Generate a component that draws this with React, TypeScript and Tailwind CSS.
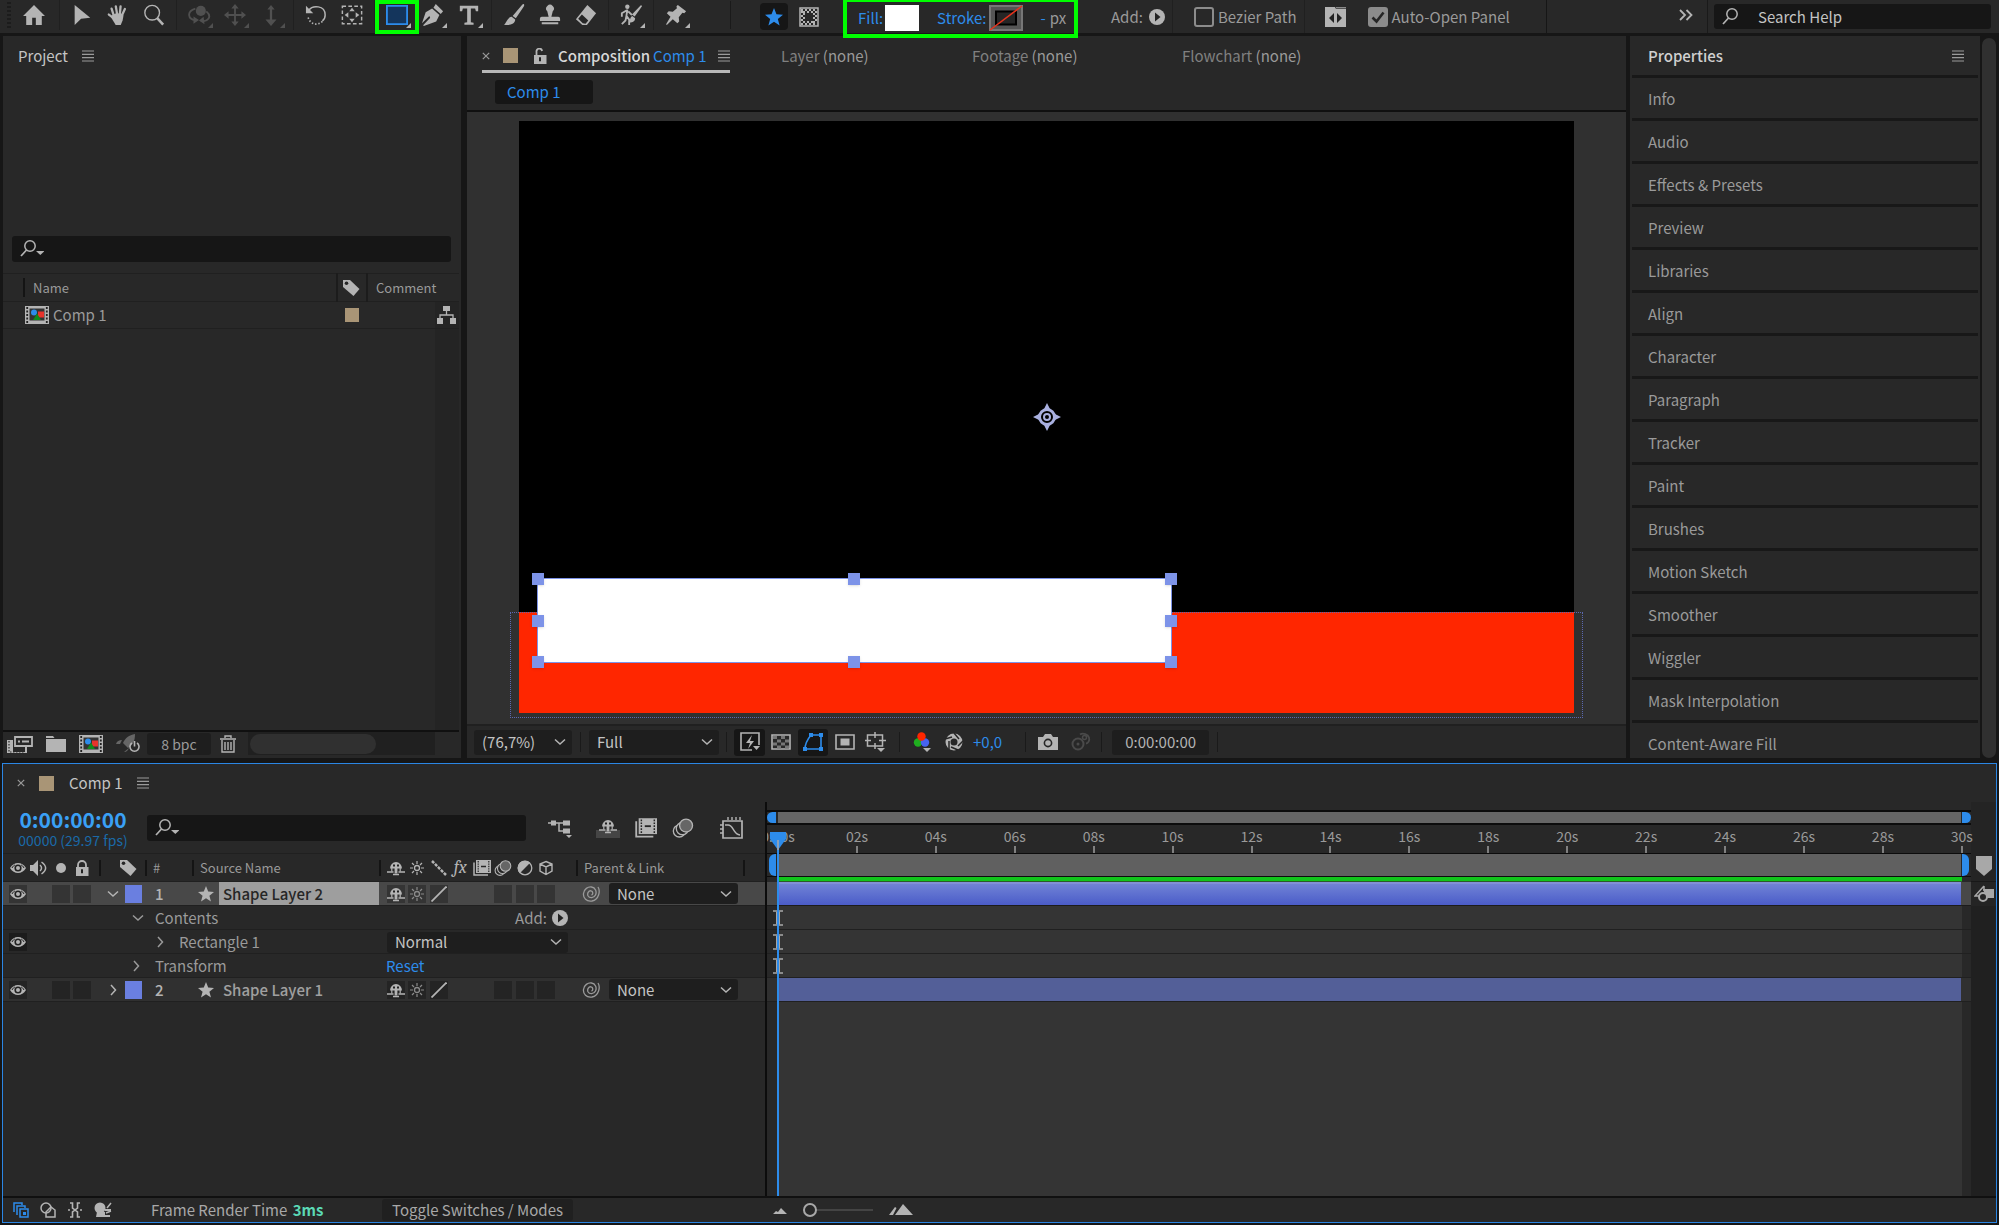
import type { ReactNode } from "react";

type IconProps = {
  children: ReactNode;
  className?: string;
  box?: string;
};

function Icon({ children, className = "h-6 w-6", box = "0 0 24 24" }: IconProps) {
  return (
    <svg
      viewBox={box}
      className={`shrink-0 ${className}`}
      fill="none"
      stroke="currentColor"
      strokeWidth="2"
      aria-hidden="true"
    >
      {children}
    </svg>
  );
}

const solid = { fill: "currentColor", stroke: "none" };

const MenuIcon = () => (
  <Icon className="h-3 w-3" box="0 0 12 12">
    <path d="M0 1h12M0 4.3h12M0 7.6h12M0 11h12" strokeWidth="1.2" />
  </Icon>
);

const CloseIcon = () => (
  <Icon className="h-2 w-2" box="0 0 8 8">
    <path d="M.8.8l6.4 6.4M7.2.8L.8 7.2" strokeWidth="1.2" />
  </Icon>
);

const ChevronDown = () => (
  <Icon className="h-3 w-3" box="0 0 12 12">
    <path d="M1 3.5l5 4.5 5-4.5" strokeWidth="1.5" />
  </Icon>
);

const ChevronRight = () => (
  <Icon className="h-3 w-3" box="0 0 12 12">
    <path d="M4 1l4.5 5L4 11" strokeWidth="1.5" />
  </Icon>
);

const SearchIcon = ({ menu = false }: { menu?: boolean }) => (
  <Icon className="h-5 w-6" box="0 0 24 20">
    <circle cx="10" cy="7" r="5.2" strokeWidth="1.5" />
    <path d="M6.5 11L1 17" strokeWidth="1.7" />
    {menu && <path d="M16 12h8.500l-4.200 4z" {...solid} />}
  </Icon>
);

const EyeIcon = () => (
  <Icon className="h-3 w-4" box="0 0 16 12">
    <path d="M0 6C4-.6 12-.6 16 6c-4 6.6-12 6.6-16 0z" {...solid} />
    <circle cx="8" cy="6" r="3.600" fill="#222" stroke="none" />
    <circle cx="8" cy="6" r="2" {...solid} />
    <path d="M2 6C3 4 4 3.4 5 3M14 6c-1-2-2-2.600-3-3" stroke="#222" strokeWidth="1" />
  </Icon>
);

const TagIcon = () => (
  <Icon className="h-[18px] w-[18px]" box="0 0 18 18">
    <path d="M1 1h7l9.500 9-6 7L1 8z" {...solid} />
    <circle cx="4.500" cy="4.300" r="1.800" fill="#262626" stroke="none" />
  </Icon>
);

const LockIcon = ({ open = false }: { open?: boolean }) => (
  <Icon className="h-4 w-[14px]" box="0 0 14 16">
    <path d={open ? "M3.500 7V4a2.800 2.800 0 0 1 5.600-1" : "M3 8V5a4 4 0 0 1 8 0v3"} strokeWidth="1.800" />
    <path d="M1 7h12.500v9H1z" {...solid} />
    <path d="M7 9.200v4" stroke="#222" strokeWidth="2" />
  </Icon>
);

const ShyIcon = () => (
  <Icon className="h-4 w-[18px]" box="0 0 18 16">
    <path d="M3 8.500a6 6.500 0 0 1 12 0zM7.600 8h2.800v5.500H7.600z" {...solid} />
    <path d="M0 12h6.500M11.500 12H18M6 14.500h6" strokeWidth="1.500" />
    <path d="M4.800 8v3.500M13.200 8v3.500" strokeWidth="1.200" />
    <path d="M6 4.500h2v2H6zM10 4.500h2v2h-2z" fill="#222" stroke="none" />
  </Icon>
);

const SunIcon = () => (
  <Icon className="h-4 w-4" box="0 0 16 16">
    <circle cx="8" cy="8" r="2.500" strokeWidth="1.300" />
    <path d="M8 1v3M8 12v3M1 8h3M12 8h3M3 3l2 2M11 11l2 2M13 3l-2 2M3 13l2-2" strokeWidth="1.200" />
  </Icon>
);

const SlashIcon = () => (
  <Icon className="h-4 w-4" box="0 0 16 16">
    <path d="M.500 15.500l15-15" strokeWidth="1.800" />
  </Icon>
);

const FrameBlendIcon = ({ className = "h-4 w-[18px]" }: { className?: string }) => (
  <Icon className={className} box="0 0 18 16">
    <path d="M1 2.500v12.500h14" strokeWidth="1.500" />
    <path d="M3 0h15v13H3z" {...solid} />
    <path d="M5.200 1v11M15.800 1v11" stroke="#262626" strokeWidth="1.200" strokeDasharray="1.400 1" />
    <path d="M8 6.500h5" stroke="#262626" strokeWidth="1.500" />
  </Icon>
);

const MotionBlurIcon = ({ className = "h-4 w-[18px]" }: { className?: string }) => (
  <Icon className={className} box="0 0 18 16">
    <circle cx="6" cy="10.500" r="4.900" fill="#262626" strokeWidth="1.100" />
    <circle cx="8.500" cy="8.500" r="5" fill="#262626" strokeWidth="1.100" />
    <circle cx="11.500" cy="6" r="5.300" fill="#666" strokeWidth="1.100" />
  </Icon>
);

const AdjustIcon = () => (
  <Icon className="h-4 w-4" box="0 0 16 16">
    <circle cx="8" cy="8" r="6.800" strokeWidth="1.300" />
    <path d="M2.800 13.200A7.300 7.300 0 0 1 13.200 2.800z" {...solid} />
  </Icon>
);

const CubeIcon = () => (
  <Icon className="h-4 w-4" box="0 0 16 16">
    <path d="M8 1.500l6 2.500v7l-6 3.500L2 11V4zM2 4l6 3 6-3M8 7v7" strokeWidth="1.400" />
  </Icon>
);

const SpiralIcon = () => (
  <Icon className="h-[18px] w-[18px]" box="0 0 18 18">
    <path
      d="M16 2c2.500 4 1 12.500-6 14C4.500 17 1 13 1.500 8.500 2 4 6 1.500 9.500 2c4 .5 5.500 5 4 8-1.500 3.200-6 3.500-7.500.8C5 8.500 6.500 5.500 9 5.800c2.200.4 2.300 3.700.5 4.200"
      strokeWidth="1.300"
    />
  </Icon>
);

const StarIcon = ({ className = "h-4 w-4" }: { className?: string }) => (
  <Icon className={className} box="0 0 16 16">
    <path d="M8 0l2.200 5.600 5.800.4-4.600 3.700L13 15.500l-5-3.300-5 3.300 1.600-5.800L0 6l5.800-.4z" {...solid} />
  </Icon>
);

const AddIcon = () => (
  <Icon className="h-4 w-4" box="0 0 16 16">
    <circle cx="8" cy="8" r="8" {...solid} />
    <path d="M6 3.500L11.500 8 6 12.500z" fill="#222" stroke="none" />
  </Icon>
);

const CompIcon = () => (
  <Icon className="h-[18px] w-6" box="0 0 24 18">
    <path d="M0 0h24v18H0z" {...solid} />
    <path d="M2.200 1v16M21.800 1v16" stroke="#222" strokeWidth="1.800" strokeDasharray="2 1.500" />
    <path d="M4.500 2.500h15v12h-15z" fill="#333" stroke="none" />
    <path d="M13 5.500h6v6h-6z" fill="#e8332c" stroke="none" />
    <circle cx="9" cy="6.500" r="3" fill="#2d8ceb" stroke="none" />
    <path d="M12 7.500l4 6.500H8z" fill="#118a1c" stroke="none" />
  </Icon>
);

/* ---------- Toolbar ---------- */

type Tool = { name: string; art: ReactNode; menu?: boolean; dim?: boolean; active?: boolean };

const toolGroups: Tool[][] = [
  [
    { name: "Selection", art: <path d="M4 1l17 14-10 1-7 7z" {...solid} /> },
    {
      name: "Hand",
      art: (
        <>
          <path d="M7.500 13L5 5M11 11L9.600 2.500M14 11l.8-8.500M16.500 12l3-6.500M8 16l-6-4.500" strokeWidth="2.500" strokeLinecap="round" />
          <path d="M6 12l4-2 6 .5 2 2-1 5.500-2 5H9.500L4 14z" {...solid} />
        </>
      ),
    },
    {
      name: "Zoom",
      art: (
        <>
          <circle cx="10" cy="9.500" r="8" strokeWidth="1.500" />
          <path d="M15.500 15.500l6.500 7" strokeWidth="2.800" />
        </>
      ),
    },
  ],
  [
    {
      name: "Orbit Around Cursor",
      dim: true,
      menu: true,
      art: (
        <>
          <circle cx="14" cy="7.500" r="5.500" {...solid} />
          <path d="M8 5C-2 8 0 17 8 17.500M20 8c7 6 1 12-6 10.500" />
          <path d="M6 13.500l6 4-6 4zM17 14l-5 4 6 4z" {...solid} />
        </>
      ),
    },
    {
      name: "Pan Under Cursor",
      dim: true,
      menu: true,
      art: (
        <>
          <path d="M12 4v16M4 12h16" />
          <path d="M12 0l4 5H8zM12 24l4-5H8zM0 12l5-4v8zM24 12l-5-4v8z" {...solid} />
        </>
      ),
    },
    {
      name: "Dolly Towards Cursor",
      dim: true,
      menu: true,
      art: (
        <>
          <path d="M12 4v15" strokeWidth="2.500" />
          <path d="M12 1l4 5H8zM12 24l6-7H6z" {...solid} />
        </>
      ),
    },
  ],
  [
    {
      name: "Rotation",
      art: (
        <>
          <path d="M4 7c4-6 18-6 18 5 0 3-1 5-3 6.500" strokeWidth="1.600" />
          <path d="M19 19c-5 5-14 4-16-6" strokeWidth="1.800" strokeDasharray="1.600 2" />
          <path d="M1 2v8h8z" {...solid} />
        </>
      ),
    },
    {
      name: "Pan Behind",
      art: (
        <>
          <path d="M1.500 2.500h21v19h-21z" strokeWidth="1.600" strokeDasharray="4 2.500" />
          <path d="M12 4l3 4H9zM12 20l3-4H9zM4 12l4-3v6zM20 12l-4-3v6z" {...solid} />
        </>
      ),
    },
  ],
  [
    { name: "Rectangle", active: true, menu: true, art: <path d="M1 2h22v20H1z" fill="#14355c" stroke="#2d8ceb" /> },
    {
      name: "Pen",
      menu: true,
      art: (
        <>
          <path d="M15 0l8 8-2.500 3L12.500 4zM11 5l8 7-3.500 7L2 24l-.8-.8L9 15l-1-2-8 8L4 9z" {...solid} />
          <circle cx="10.500" cy="13" r="2" {...solid} />
        </>
      ),
    },
    {
      name: "Type",
      menu: true,
      art: <path d="M2 2h20v6h-2.500l-.8-3H14v15l3 .5v2H7v-2l3-.5V5H5.300l-.8 3H2z" {...solid} />,
    },
  ],
  [
    {
      name: "Brush",
      art: <path d="M22.500 0c1 .5.8 1.500 0 3L14 15.500 10.500 13 20 2c1-1.300 2-2.500 2.500-2zM9.500 14l3.800 3c0 5-6.500 7-12.300 5.500 3-1.500 3-7.500 8.500-8.500z" {...solid} />,
    },
    {
      name: "Clone Stamp",
      art: <path d="M9 8a4.200 4.200 0 1 1 6 0l-1.500 6H21a2 2 0 0 1 2 2v2.500H1V16a2 2 0 0 1 2-2h7.500zM3 20h18v2.200H3z" {...solid} />,
    },
    {
      name: "Eraser",
      art: (
        <>
          <path d="M13.500 1l9.500 9-10 13H8l-7-6.500z" {...solid} />
          <path d="M7.500 11.500l7 6.500-3 3.500-3-.5-5-5z" fill="#262626" stroke="none" />
        </>
      ),
    },
  ],
  [
    {
      name: "Roto Brush",
      menu: true,
      art: (
        <>
          <circle cx="8" cy="3" r="2.400" {...solid} />
          <path d="M8 6l-1 7 3 4v6M7 13l-1 5-4 4M7 7l-5 3v4M9 8l4 4" strokeWidth="2" />
          <path d="M23 1l1 1.500-8 11-3-2zM13.500 13l3 2.500c0 4-4 5-7 4.500 2-1.500 1-6 4-7z" {...solid} />
        </>
      ),
    },
  ],
  [
    {
      name: "Puppet Pin",
      menu: true,
      art: <path d="M14 1l9 7-2 2-2-.5-4 5 .5 4.500-2 2-5-4.500L2 23l-.8-.8L6 14l-4-4 2-2 4.500.5 4.500-4-.5-2z" {...solid} />,
    },
  ],
];

function ToolButton({ tool }: { tool: Tool }) {
  return (
    <button
      type="button"
      aria-label={tool.name}
      className={`relative flex h-[30px] w-9 items-center justify-center ${tool.dim ? "text-[#505050]" : "text-[#b4b4b4]"}`}
    >
      <Icon className="h-[22px] w-6">{tool.art}</Icon>
      {tool.menu && (
        <svg viewBox="0 0 5 5" className="absolute right-1 bottom-0.5 h-[5px] w-[5px]" aria-hidden="true">
          <path d="M5 0v5H0z" fill="currentColor" />
        </svg>
      )}
      {tool.active && <span className="absolute -inset-x-1 top-0 -bottom-1 border-4 border-[#00ff00]" />}
    </button>
  );
}

function CheckBox({ id, label, checked = false }: { id: string; label: string; checked?: boolean }) {
  return (
    <label htmlFor={id} className="flex items-center gap-1">
      <span className="relative flex h-5 w-5">
        <input
          id={id}
          type="checkbox"
          defaultChecked={checked}
          className="peer h-5 w-5 appearance-none rounded-[3px] border-2 border-[#8c8c8c] checked:bg-[#8c8c8c]"
        />
        <svg viewBox="0 0 20 20" className="pointer-events-none absolute inset-0 hidden peer-checked:block" aria-hidden="true">
          <path d="M4.500 10.500l4 4 7-9" fill="none" stroke="#262626" strokeWidth="2.600" />
        </svg>
      </span>
      {label}
    </label>
  );
}

const Divider = ({ className = "h-7" }: { className?: string }) => (
  <span className={`w-px shrink-0 bg-[#1a1a1a] ${className}`} />
);

function Toolbar() {
  return (
    <header className="flex h-[33px] shrink-0 items-start bg-[#282828] text-[#9a9a9a]">
      <div className="flex h-[30px] items-center">
        <span className="ml-[7px] h-[26px] w-1 bg-[repeating-linear-gradient(#1c1c1c_0_2px,#282828_2px_4px)]" />
        <button type="button" aria-label="Home" className="ml-[5px] flex w-9 justify-center text-[#b4b4b4]">
          <Icon className="h-[22px] w-6">
            <path d="M12 1l12 12h-3.500v10H14v-8h-4v8H3.500V13H0z" {...solid} />
          </Icon>
        </button>
        <span className="w-[7px]" />
        {toolGroups.map((group) => (
          <div key={group[0].name} className="flex border-l border-[#202020] px-1">
            {group.map((tool) => (
              <ToolButton key={tool.name} tool={tool} />
            ))}
          </div>
        ))}
        <span className="w-8" />
        <Divider />
      </div>

      <div className="ml-[29px] flex h-[33px] items-center">
        <button type="button" aria-label="Tool creates shape" className="flex h-[27px] w-7 items-center justify-center rounded bg-[#161616] text-[#2d8ceb]">
          <StarIcon className="h-[18px] w-[18px]" />
        </button>
        <button type="button" aria-label="Tool creates mask" className="ml-[11px] text-[#b4b4b4]">
          <Icon className="h-5 w-5" box="0 0 20 20">
            <path d="M1 1h18v18H1z" strokeWidth="1.500" />
            <path d="M2 3h16M2 17h16M4 5h12M4 15h12" strokeDasharray="2 2" />
            <path d="M3 4v12M17 4v12M5 6v10M15 6v10" strokeDasharray="2 2" />
          </Icon>
        </button>
      </div>

      <div className="z-10 ml-6 flex h-[38px] w-[235px] shrink-0 items-center border-4 border-t-2 border-[#00ff00] pl-[11px]">
        <button type="button" className="text-[#2d8ceb]">Fill:</button>
        <button type="button" aria-label="Fill color" className="ml-0.5 h-[26px] w-[34px] bg-white" />
        <button type="button" className="ml-[18px] text-[#2d8ceb]">Stroke:</button>
        <button type="button" aria-label="Stroke color" className="ml-0.5">
          <svg viewBox="0 0 34 26" className="h-[26px] w-[34px]" aria-hidden="true">
            <path d="M0 0h34v26H0z" fill="#777" />
            <path d="M2 2h30v22H2z" fill="#555" />
            <path d="M7 6.500h20v13H7z" fill="#262626" stroke="#000" strokeWidth="2" />
            <path d="M1 25L33 1" stroke="#e8331c" strokeWidth="1.500" />
          </svg>
        </button>
        <span className="ml-[18px] text-[#2d8ceb]">-</span>
        <span className="ml-1">px</span>
      </div>

      <div className="flex h-[33px] items-center">
        <button type="button" className="ml-[33px] flex items-center gap-1.5">
          Add:
          <span className="text-[#b4b4b4]"><AddIcon /></span>
        </button>
        <span className="ml-[7px] w-px self-stretch bg-[#202020]" />
        <span className="w-[21px]" />
        <CheckBox id="bezier" label="Bezier Path" />
        <span className="ml-[7px] w-px self-stretch bg-[#202020]" />
        <button type="button" aria-label="Snapping" className="ml-5 text-[#b4b4b4]">
          <Icon className="h-5 w-[21px]" box="0 0 21 20">
            <path d="M0 0h10l1 2h10v18H0z" {...solid} />
            <path d="M11 .8h10" strokeWidth="1" />
            <path d="M9 6v10l-5-5zM12 6v10l5-5z" fill="#222" stroke="none" />
          </Icon>
        </button>
        <span className="w-[22px]" />
        <CheckBox id="autoopen" label="Auto-Open Panel" checked />
      </div>
      <span className="ml-9 h-[33px] w-px bg-[#161616]" />

      <div className="ml-auto flex h-[33px] items-center">
        <button type="button" aria-label="More workspaces" className="mr-[14px] pb-1 text-[#b4b4b4]">
          <Icon className="h-3 w-[14px]" box="0 0 14 12">
            <path d="M1 1l5 5-5 5M7.500 1l5 5-5 5" strokeWidth="1.800" />
          </Icon>
        </button>
        <Divider className="h-[33px]" />
        <label className="mr-2 ml-1.5 flex h-[25px] w-[277px] items-center rounded-[3px] bg-[#161616] pl-2 text-[#b4b4b4]">
          <SearchIcon />
          <input
            type="text"
            aria-label="Search Help"
            placeholder="Search Help"
            className="ml-3 w-40 bg-transparent outline-none placeholder:text-[#c4c4c4]"
          />
        </label>
      </div>
    </header>
  );
}

/* ---------- Project panel ---------- */

function ProjectPanel() {
  return (
    <section className="flex w-[458px] shrink-0 flex-col bg-[#282828] pr-0.5">
      <div className="flex h-10 items-center gap-3.5 pl-[15px]">
        <h2 className="text-[#c4c4c4]">Project</h2>
        <MenuIcon />
      </div>
      <label className="mr-2 ml-[9px] mt-40 flex h-[26px] items-center rounded-[3px] bg-[#161616] pl-2 text-[#b4b4b4]">
        <SearchIcon menu />
        <input type="text" aria-label="Search project" className="w-full bg-transparent outline-none" />
      </label>
      <table className="mt-[11px] w-full table-fixed border-t border-[#202020] text-left">
        <thead>
          <tr className="h-7 border-b border-[#202020] text-[13px]">
            <th className="pl-5 font-normal">
              <span className="border-l-2 border-[#141414] pl-2">Name</span>
            </th>
            <th className="w-[30px] border-x-2 border-[#1c1c1c] pl-1 text-[#b4b4b4]" aria-label="Label">
              <TagIcon />
            </th>
            <th className="w-[68px] pl-2 font-normal">Comment</th>
            <th className="w-6" aria-label="Flowchart" />
          </tr>
        </thead>
        <tbody>
          <tr className="h-[27px] border-b border-[#202020]">
            <td className="pl-[22px]">
              <span className="flex items-center gap-1 text-[#b4b4b4]">
                <CompIcon />
                <span className="text-[#9a9a9a]">Comp 1</span>
              </span>
            </td>
            <td className="pl-2">
              <span className="block h-[14px] w-[14px] bg-[#a99576]" />
            </td>
            <td />
            <td className="bg-[#242424] pl-0.5 text-[#b4b4b4]">
              <Icon className="h-[18px] w-[19px]" box="0 0 19 18">
                <path d="M6 0h7v5H6zM0 12h6v6H0zM13 12h6v6h-6z" {...solid} />
                <path d="M9.500 4v5M3 13V9h13v4" strokeWidth="1.300" />
              </Icon>
            </td>
          </tr>
        </tbody>
      </table>
      <div className="flex flex-1 justify-end">
        <span className="w-6 bg-[#242424]" />
      </div>
      <footer className="flex h-7 items-center border-t-2 border-[#101010] pb-[3px] text-[#b4b4b4]">
        <button type="button" aria-label="Interpret Footage" className="ml-1">
          <Icon className="h-[18px] w-[26px]" box="0 0 26 18">
            <path d="M0 5h6v12h12v-5h2v6H0z" {...solid} />
            <path d="M2 6v11h16" stroke="#282828" strokeWidth="1.200" strokeDasharray="1.500 1.500" />
            <path d="M8 2h17v9H8z" fill="#282828" strokeWidth="1.800" />
            <path d="M11 6.500h2M15 6.500h7" />
          </Icon>
        </button>
        <button type="button" aria-label="New Folder" className="ml-[13px]">
          <Icon className="h-4 w-5" box="0 0 20 16">
            <path d="M0 0h7l1.500 2H20v14H0z" {...solid} />
            <path d="M0 2.500h20" stroke="#262626" strokeWidth="1" />
          </Icon>
        </button>
        <button type="button" aria-label="New Composition" className="ml-[13px]"><CompIcon /></button>
        <button type="button" aria-label="Proxy settings" className="ml-[13px]">
          <Icon className="h-5 w-6" box="0 0 24 20">
            <path d="M19 0C13 1 9 4 7 9l5 5c5-3 7-7 7-14zM0 10c1-3 3-4 6-4l-2 4zM8 18c3 0 4-2 5-4" fill="#666" stroke="none" />
            <path d="M16 9a4.500 4.500 0 1 0 5 0M18.500 7v5.500" strokeWidth="1.600" />
          </Icon>
        </button>
        <button type="button" className="ml-[7px] h-[22px] w-16 rounded-[3px] bg-[#1e1e1e] text-sm text-[#9a9a9a]">
          8 bpc
        </button>
        <button type="button" aria-label="Delete" className="ml-[9px]">
          <Icon className="h-[18px] w-4" box="0 0 16 18">
            <path d="M0 4h16M5 3V1h6v2M2 5v12h12V5M5 7v8M8 7v8M11 7v8" strokeWidth="1.400" />
          </Icon>
        </button>
        <span className="ml-3 flex h-full w-[187px] items-center bg-[#202020]">
          <span className="ml-0.5 h-5 w-[126px] rounded-full bg-[#303030]" />
        </span>
      </footer>
    </section>
  );
}

/* ---------- Composition viewer ---------- */

const handles = [
  "left-0 top-0",
  "left-1/2 top-0",
  "left-full top-0",
  "left-0 top-1/2",
  "left-full top-1/2",
  "left-0 top-full",
  "left-1/2 top-full",
  "left-full top-full",
];

type PickerProps = { label: string; value: string; className: string };

function Picker({ label, value, className }: PickerProps) {
  return (
    <span className={`relative flex shrink-0 items-center ${className}`}>
      <select
        aria-label={label}
        defaultValue={value}
        className="h-full w-full appearance-none rounded-[3px] bg-[#1e1e1e] pl-2 text-[#c4c4c4] outline-none"
      >
        <option>{value}</option>
      </select>
      <span className="pointer-events-none absolute right-1.5 text-[#b4b4b4]">
        <ChevronDown />
      </span>
    </span>
  );
}

function Viewer() {
  return (
    <section className="flex min-w-0 flex-1 flex-col bg-[#282828]">
      <div className="flex h-[37px] items-start">
        <div className="ml-[15px] flex h-[37px] w-[248px] items-center border-b-[3px] border-[#b8b8b8] pt-[5px]">
          <CloseIcon />
          <span className="ml-[13px] h-[15px] w-[15px] bg-[#a99576]" />
          <span className="ml-[15px] text-[#b4b4b4]"><LockIcon open /></span>
          <h2 className="ml-[11px] font-medium text-[#d8d8d8]">Composition</h2>
          <span className="ml-[3px] text-[#2d8ceb]">Comp 1</span>
          <span className="ml-auto"><MenuIcon /></span>
        </div>
        <nav className="flex h-10 items-center text-[#808080]">
          <button type="button" className="ml-[51px] w-[191px] text-left">Layer <span className="text-[#9a9a9a]">(none)</span></button>
          <button type="button" className="w-[210px] text-left">Footage <span className="text-[#9a9a9a]">(none)</span></button>
          <button type="button">Flowchart <span className="text-[#9a9a9a]">(none)</span></button>
        </nav>
      </div>
      <div className="flex h-[39px] items-start border-b-2 border-[#101010] pt-[7px] pl-7">
        <button type="button" className="h-6 w-[98px] rounded-[3px] bg-[#161616] pl-3 text-left text-[#2d8ceb]">
          Comp 1
        </button>
      </div>

      <div className="flex min-h-0 flex-1 bg-[#303030] px-[52px] pt-[9px] pb-[11px]">
        <div className="relative flex-1 bg-black">
          <div className="absolute inset-x-0 top-[83%] bottom-0 bg-[#ff2600]" />
          <div className="absolute -inset-x-[9px] top-[83%] -bottom-[5px] border border-dotted border-[#5a68b0]" />
          <div className="absolute top-[77.2%] left-[1.7%] h-[14.4%] w-[60.2%] border border-[#7d93e8] bg-white">
            {handles.map((place) => (
              <span
                key={place}
                className={`absolute h-3 w-3 -translate-x-1/2 -translate-y-1/2 bg-[#7d93e8] shadow ${place}`}
              />
            ))}
          </div>
          <svg viewBox="0 0 28 28" className="absolute top-1/2 left-1/2 h-7 w-7 -translate-x-1/2 -translate-y-1/2" aria-hidden="true">
            <circle cx="14" cy="14" r="7.500" fill="none" stroke="#a9b0e0" strokeWidth="3" />
            <circle cx="14" cy="14" r="3" fill="none" stroke="#a9b0e0" strokeWidth="2" />
            <path d="M14 0l3 6h-6zM14 28l3-6h-6zM0 14l6-3v6zM28 14l-6-3v6z" fill="#a9b0e0" />
          </svg>
        </div>
      </div>

      <footer className="flex h-[34px] shrink-0 items-center border-t-2 border-[#202020] pl-[7px] text-[#b4b4b4]">
        <Picker label="Magnification" value="(76,7%)" className="h-[25px] w-[98px]" />
        <Divider className="mx-2 h-5" />
        <Picker label="Resolution" value="Full" className="h-[25px] w-[130px]" />
        <Divider className="mx-[7px] h-5" />
        <button type="button" aria-label="Fast Previews" className="flex h-[27px] w-[31px] items-center justify-center rounded-[3px] bg-[#161616]">
          <Icon className="h-5 w-5" box="0 0 20 20">
            <path d="M12 18H1V1h18v12" strokeWidth="1.600" />
            <path d="M12 3l-6 8h4l-2 6 6-8h-4zM13 14h7l-3.500 4z" {...solid} />
          </Icon>
        </button>
        <button type="button" aria-label="Toggle Transparency Grid" className="ml-1.5">
          <Icon className="h-4 w-5" box="0 0 20 16">
            <path d="M1 1h18v14H1z" strokeWidth="1.600" />
            <path d="M2 3.500h16M2 10h16" stroke="#777" strokeWidth="3" strokeDasharray="4 4" />
            <path d="M6 7h12M6 13h12" stroke="#777" strokeWidth="3" strokeDasharray="4 4" />
          </Icon>
        </button>
        <button type="button" aria-label="Toggle Mask Visibility" className="ml-[7px] flex h-[27px] w-[30px] items-center justify-center rounded-[3px] bg-[#161616] text-[#2d8ceb]">
          <Icon className="h-[18px] w-5" box="0 0 20 18">
            <path d="M2 16C2 11 4 7 8 2h10v14z" strokeWidth="1.600" />
            <path d="M0 14h4v4H0zM16 14h4v4h-4zM16 0h4v4h-4zM6 0h4v4H6z" {...solid} />
          </Icon>
        </button>
        <button type="button" aria-label="Region of Interest" className="ml-[7px]">
          <Icon className="h-4 w-5" box="0 0 20 16">
            <path d="M1 1h18v14H1z" strokeWidth="1.600" />
            <path d="M5.500 4.500h9v7h-9z" {...solid} />
          </Icon>
        </button>
        <button type="button" aria-label="Grid and Guides" className="ml-2.5">
          <Icon className="h-5 w-[21px]" box="0 0 21 20">
            <path d="M2.500 3h15v11h-15zM10 0v6M10 11v6M0 8.500h6M14 8.500h7" strokeWidth="1.500" />
            <path d="M9 8.500h2M12 16h8l-4 4z" {...solid} />
          </Icon>
        </button>
        <Divider className="mx-[13px] h-5" />
        <button type="button" aria-label="Show Channel">
          <Icon className="h-5 w-5" box="0 0 20 20">
            <circle cx="5" cy="10.500" r="4.200" fill="#1fae1f" stroke="none" />
            <circle cx="12" cy="10.500" r="4.200" fill="#4664f0" stroke="none" />
            <circle cx="8.500" cy="4.500" r="4.200" fill="#ff2600" stroke="none" />
            <path d="M10 16h8l-4 4z" {...solid} />
          </Icon>
        </button>
        <button type="button" aria-label="Reset Exposure" className="ml-3">
          <Icon className="h-[18px] w-[18px]" box="0 0 18 18">
            <circle cx="9" cy="9" r="6" strokeWidth="5" />
            <path d="M9 0l5 6M18 8l-5 5M13 17l-7-3M4 16L4 8M0 6l7-2" stroke="#262626" strokeWidth="1.500" />
          </Icon>
        </button>
        <span className="ml-2.5 text-[#2d8ceb]">+0,0</span>
        <Divider className="mr-3 ml-[23px] h-5" />
        <button type="button" aria-label="Take Snapshot">
          <Icon className="h-4 w-5" box="0 0 20 16">
            <path d="M0 3h5l2-3h6l2 3h5v13H0z" {...solid} />
            <circle cx="10" cy="9" r="3.600" stroke="#262626" strokeWidth="1.600" />
          </Icon>
        </button>
        <button type="button" aria-label="Show Snapshot" className="ml-3 text-[#4a4a4a]">
          <Icon className="h-5 w-[21px]" box="0 0 21 20">
            <circle cx="8" cy="12" r="5.500" />
            <circle cx="8" cy="12" r="1.500" {...solid} />
            <path d="M10 2.500c3-2 8 0 9 3s-1 6-3 6" strokeWidth="1.800" />
            <circle cx="14.500" cy="5.500" r="2" strokeWidth="1.500" />
          </Icon>
        </button>
        <Divider className="mx-2.5 h-5" />
        <button type="button" className="h-[25px] w-[97px] rounded-[3px] bg-[#1e1e1e]">0:00:00:00</button>
        <Divider className="ml-2 h-5" />
      </footer>
    </section>
  );
}

/* ---------- Side panel ---------- */

const panels = [
  "Info",
  "Audio",
  "Effects & Presets",
  "Preview",
  "Libraries",
  "Align",
  "Character",
  "Paragraph",
  "Tracker",
  "Paint",
  "Brushes",
  "Motion Sketch",
  "Smoother",
  "Wiggler",
  "Mask Interpolation",
  "Content-Aware Fill",
];

function SidePanels() {
  return (
    <aside className="flex w-[369px] shrink-0 bg-[#161616]">
      <div className="min-w-0 flex-1 overflow-hidden bg-[#282828] px-0.5">
        <div className="flex h-[42px] items-center border-b-[3px] border-[#181818] pr-3.5 pl-4">
          <h2 className="font-medium text-[#d0d0d0]">Properties</h2>
          <span className="ml-auto"><MenuIcon /></span>
        </div>
        {panels.map((name) => (
          <button
            key={name}
            type="button"
            className="block h-[43px] w-full border-b-[3px] border-[#181818] pt-px pl-4 text-left"
          >
            {name}
          </button>
        ))}
      </div>
      <span className="mt-0.5 mr-[3px] ml-0.5 w-[14px] rounded-lg bg-[#303030]" />
    </aside>
  );
}

/* ---------- Timeline ---------- */

const Separator = () => <span className="h-4 w-0.5 shrink-0 bg-[#141414]" />;

function Switch({ children, tone = "" }: { children?: ReactNode; tone?: string }) {
  return (
    <span className={`mx-auto flex h-[18px] w-[18px] items-center justify-center ${tone}`}>
      {children}
    </span>
  );
}

type LayerProps = { index: number; name: string; selected?: boolean };

function LayerRow({ index, name, selected = false }: LayerProps) {
  const tone = selected ? "bg-[#343434]" : "bg-[#242424]";
  return (
    <div
      className={`flex h-6 shrink-0 items-center border-b border-[#202020] ${selected ? "bg-[#484848]" : "bg-[#303030]"}`}
    >
      <div className="ml-1 grid w-[86px] shrink-0 grid-cols-4 text-[#b4b4b4]">
        <Switch tone={tone}><EyeIcon /></Switch>
        <span />
        <Switch tone={tone} />
        <Switch tone={tone} />
      </div>
      <div className="flex w-[52px] shrink-0 items-center justify-end gap-1.5 pr-[3px]">
        <button type="button" aria-label={`Expand ${name}`} className="text-[#b4b4b4]">
          {selected ? <ChevronDown /> : <ChevronRight />}
        </button>
        <span className="h-[18px] w-[17px] bg-[#6a7fe0]" />
      </div>
      <span className="w-[47px] shrink-0 pl-2.5 font-medium text-[#b4b4b4]">{index}</span>
      <div className="flex w-[187px] shrink-0 items-center gap-[5px] self-stretch pl-1.5 text-[#b4b4b4]">
        <StarIcon />
        <span
          className={`flex h-full flex-1 items-center pl-1 font-medium ${selected ? "bg-[#9e9e9e] text-[#262626]" : "text-[#a0a0a0]"}`}
        >
          {name}
        </span>
      </div>
      <div className="w-[197px] shrink-0 pl-1.5">
        <div className="grid w-[172px] grid-cols-8 text-[#b4b4b4]">
          <Switch tone={tone}><ShyIcon /></Switch>
          <Switch tone={`${tone} text-[#8a8a8a]`}><SunIcon /></Switch>
          <Switch tone={tone}><SlashIcon /></Switch>
          <span />
          <span />
          <Switch tone={tone} />
          <Switch tone={tone} />
          <Switch tone={tone} />
        </div>
      </div>
      <span className="ml-1.5 w-[27px] shrink-0"><SpiralIcon /></span>
      <Picker label={`Parent of ${name}`} value="None" className="h-[21px] w-[129px]" />
    </div>
  );
}

function Outline() {
  return (
    <div className="flex w-[764px] shrink-0 flex-col border-r-2 border-[#0c0c0c]">
      <div className="flex h-[51px] shrink-0 items-center">
        <div className="w-[144px] shrink-0 pr-1 text-center">
          <p className="text-[21px] leading-6 font-bold text-[#3aa0f5]">0:00:00:00</p>
          <p className="text-sm leading-[18px] text-[#1a6aa8]">00000 (29.97 fps)</p>
        </div>
        <label className="flex h-[26px] w-[379px] shrink-0 items-center rounded-[3px] bg-[#161616] pl-2 text-[#b4b4b4]">
          <SearchIcon menu />
          <input type="text" aria-label="Search layers" className="w-full bg-transparent outline-none" />
        </label>
        <div className="flex flex-1 items-center text-[#b4b4b4]">
          <button type="button" aria-label="Mini-Flowchart" className="ml-[22px]">
            <Icon className="h-5 w-6" box="0 0 24 20">
              <path d="M0 5h15M11 5v8h5" strokeWidth="1.500" />
              <path d="M3 2.500h5v5H3zM15 2.500h7v5h-7zM15 10.500h7v5h-7zM18 17h6l-3 3z" {...solid} />
            </Icon>
          </button>
          <button type="button" aria-label="Hide shy layers" className="ml-6 flex h-5 w-6 justify-center bg-[linear-gradient(transparent_60%,#454545_60%)]">
            <ShyIcon />
          </button>
          <button type="button" aria-label="Frame blending" className="ml-[15px]"><FrameBlendIcon className="h-5 w-[22px]" /></button>
          <button type="button" aria-label="Motion blur" className="ml-[15px]"><MotionBlurIcon className="h-5 w-[22px]" /></button>
          <button type="button" aria-label="Graph Editor" className="ml-[26px]">
            <Icon className="h-[22px] w-6" box="0 0 24 22">
              <path d="M3 4h19v17H3z" strokeWidth="1.700" />
              <path d="M5 8h3c6 0 5 10 12 10M8 0v3M12 0v3M16 0v3M20 0v3M0 8h3M0 12h3M0 16h3" strokeWidth="1.400" />
            </Icon>
          </button>
        </div>
      </div>

      <div className="flex h-[29px] shrink-0 items-center border-y border-[#202020] pt-px text-[13px]">
        <div className="ml-1 grid w-[86px] shrink-0 grid-cols-4 text-[#b4b4b4]">
          <Switch><EyeIcon /></Switch>
          <Switch>
            <Icon className="h-4 w-[18px]" box="0 0 18 16">
              <path d="M0 5h3l5-5v16l-5-5H0z" {...solid} />
              <path d="M10 5c2 2 2 4 0 6M11.500 2c5.500 4 5.500 8 0 12" strokeWidth="1.500" />
            </Icon>
          </Switch>
          <Switch><span className="h-2.5 w-2.5 rounded-full bg-[#b4b4b4]" /></Switch>
          <Switch><LockIcon /></Switch>
        </div>
        <div className="flex w-[52px] shrink-0 items-center pl-1.5">
          <Separator />
          <span className="ml-[18px] text-[#b4b4b4]"><TagIcon /></span>
        </div>
        <div className="flex w-[47px] shrink-0 items-center gap-1.5">
          <Separator />#
        </div>
        <div className="flex w-[187px] shrink-0 items-center gap-1.5">
          <Separator />Source Name
        </div>
        <div className="flex w-[197px] shrink-0 items-center">
          <Separator />
          <div className="ml-1 grid w-[172px] grid-cols-8 text-[#b4b4b4]">
            <Switch><ShyIcon /></Switch>
            <Switch><SunIcon /></Switch>
            <Switch>
              <Icon className="h-4 w-4" box="0 0 16 16">
                <path d="M1 1l14 14" strokeWidth="2.500" strokeDasharray="3 1.200" />
              </Icon>
            </Switch>
            <Switch><i className="font-serif text-lg leading-4">fx</i></Switch>
            <Switch><FrameBlendIcon /></Switch>
            <Switch><MotionBlurIcon /></Switch>
            <Switch><AdjustIcon /></Switch>
            <Switch><CubeIcon /></Switch>
          </div>
        </div>
        <div className="flex w-[167px] shrink-0 items-center gap-1.5">
          <Separator />Parent &amp; Link
        </div>
        <Separator />
      </div>

      <LayerRow index={1} name="Shape Layer 2" selected />
      <div className="flex h-6 shrink-0 items-center border-b border-[#202020] pt-px">
        <button type="button" className="ml-[129px] flex items-center gap-[11px]">
          <ChevronDown />
          Contents
        </button>
        <button type="button" className="ml-auto flex items-center gap-[5px] pr-[197px]">
          Add:
          <span className="text-[#b4b4b4]"><AddIcon /></span>
        </button>
      </div>
      <div className="flex h-6 shrink-0 items-center border-b border-[#202020] pt-px">
        <div className="ml-1 w-[22px] text-[#b4b4b4]">
          <Switch tone="bg-[#1c1c1c]"><EyeIcon /></Switch>
        </div>
        <button type="button" className="ml-[125px] flex w-[233px] items-center gap-[13px]">
          <ChevronRight />
          Rectangle 1
        </button>
        <Picker label="Blending mode" value="Normal" className="h-[21px] w-[181px]" />
      </div>
      <div className="flex h-6 shrink-0 items-center border-b border-[#202020] pt-px">
        <button type="button" className="ml-[127px] flex w-[256px] items-center gap-[13px]">
          <ChevronRight />
          Transform
        </button>
        <button type="button" className="text-[#2d8ceb]">Reset</button>
      </div>
      <LayerRow index={2} name="Shape Layer 1" />
    </div>
  );
}

const seconds = ["0:00s", "02s", "04s", "06s", "08s", "10s", "12s", "14s", "16s", "18s", "20s", "22s", "24s", "26s", "28s", "30s"];

const Keyframe = () => (
  <Icon className="h-4 w-3" box="0 0 12 16">
    <path d="M1 1h3.500L6 2l1.500-1H11M1 15h3.500L6 14l1.500 1H11" strokeWidth="1.400" />
    <path d="M6 2v12" strokeWidth="4" />
  </Icon>
);

function Tracks() {
  return (
    <div className="relative flex min-w-0 flex-1 flex-col">
      <div className="mt-2 flex h-[15px] shrink-0 border-y-2 border-[#0c0c0c]">
        <span className="w-[9px] rounded-l-full bg-[#2d8ceb]" />
        <span className="ml-0.5 flex-1 bg-[#666]" />
        <span className="ml-px w-[9px] rounded-r-full bg-[#2d8ceb]" />
      </div>
      {/* the last label runs a little into the gutter */}
      <div className="relative z-10 -mr-1 flex h-7 shrink-0 justify-between overflow-hidden pr-[13px] pl-[11px] text-sm">
        {seconds.map((label) => (
          <div key={label} className="flex w-0 flex-col items-center justify-between">
            <span className="pt-px leading-5">{label}</span>
            <span className="h-[7px] w-0.5 shrink-0 bg-[#808080]" />
          </div>
        ))}
      </div>
      <div className="flex h-6 shrink-0 border-y border-[#0c0c0c]">
        <span className="ml-0.5 w-[7px] rounded-l-md bg-[#2d8ceb]" />
        <span className="ml-0.5 flex-1 bg-[#606060]" />
        <span className="mr-0.5 ml-px w-[7px] rounded-r-md bg-[#2d8ceb]" />
      </div>
      <div className="mr-[9px] ml-[11px] h-[5px] shrink-0 border-b border-[#2c5a2c] bg-[#12c41c]" />

      <div className="flex h-6 shrink-0 border-b border-[#1c1c1c] bg-[#484848] pr-2.5 pl-[11px]">
        <span className="flex-1 border-t-2 border-[#8190d8] bg-linear-to-b from-[#7182d6] to-[#4b5cc8]" />
      </div>
      {["contents", "rectangle", "transform"].map((row) => (
        <div key={row} className="flex h-6 shrink-0 border-b border-[#202020] pr-[9px] pl-[11px]">
          <div className="flex flex-1 items-center bg-[#343434] text-[#a8a8a8]">
            <span className="flex w-0 justify-center"><Keyframe /></span>
          </div>
        </div>
      ))}
      <div className="flex h-6 shrink-0 border-b border-[#202020] bg-[#303030] pr-2.5 pl-[11px]">
        <span className="flex-1 bg-[#535f98]" />
      </div>
      <div className="mr-[9px] ml-[11px] flex-1 bg-[#343434]" />

      {/* current time indicator */}
      <div className="absolute top-[30px] bottom-0 left-[3px] z-20 flex w-4 flex-col items-center">
        <svg viewBox="0 0 16 18" className="h-[18px] w-4 shrink-0" aria-hidden="true">
          <path d="M0 0h16v7l-8 11L0 7z" fill="#2d8ceb" />
          <path d="M8 8v10" stroke="#8aa0b8" strokeWidth="2" />
        </svg>
        <span className="w-0.5 flex-1 bg-[#2d8ceb]" />
      </div>
    </div>
  );
}

function Timeline() {
  return (
    <section className="mx-0.5 mt-[5px] mb-0.5 flex h-[460px] shrink-0 flex-col border border-[#2b86e4] bg-[#282828]">
      <div className="flex h-[38px] shrink-0 items-center pl-3.5">
        <CloseIcon />
        <span className="ml-[14px] h-[15px] w-[15px] bg-[#a99576]" />
        <h2 className="ml-[15px] text-[#c4c4c4]">Comp 1</h2>
        <span className="ml-[14px]"><MenuIcon /></span>
      </div>

      <div className="flex min-h-0 flex-1 border-b-2 border-[#101010]">
        <Outline />
        <Tracks />
        <div className="flex w-[25px] shrink-0 flex-col bg-[#202020] text-[#a8a8a8]">
          <div className="flex h-20 shrink-0 items-end justify-center border-b border-[#181818] bg-[#242424] pb-[5px]">
            <Icon className="h-5 w-4" box="0 0 16 20">
              <path d="M0 0h16v13l-8 7-8-7z" {...solid} />
            </Icon>
          </div>
          <button type="button" aria-label="Comp button" className="flex h-6 items-center justify-center bg-[#242424]">
            <Icon className="h-[18px] w-5" box="0 0 20 18">
              <path d="M9 4h11v9h-8z" {...solid} />
              <path d="M10 1L1 11h6M10 1v5" strokeWidth="1.500" />
              <circle cx="9" cy="12" r="4" fill="#242424" />
            </Icon>
          </button>
        </div>
      </div>

      <footer className="flex h-6 shrink-0 items-center text-[#b4b4b4]">
        <button type="button" aria-label="Layer Switches pane" className="ml-2.5 text-[#2d8ceb]">
          <Icon className="h-4 w-4" box="0 0 16 16">
            <path d="M1 10V1h8v2M4 13V4h8v2M7 7h8v8H7z" strokeWidth="1.500" />
            <path d="M10 10h3v3h-3z" {...solid} />
          </Icon>
        </button>
        <button type="button" aria-label="Transfer Controls pane" className="ml-[11px]">
          <Icon className="h-4 w-4" box="0 0 16 16">
            <circle cx="6" cy="6" r="5" strokeWidth="1.500" />
            <path d="M6 10l5-5 4 3v7H6z" strokeWidth="1.500" />
          </Icon>
        </button>
        <button type="button" aria-label="In/Out pane" className="ml-[11px]">
          <Icon className="h-4 w-4" box="0 0 16 16">
            <path d="M3 1h2.500v5L8 8l-2.500 2v5H3M13 1h-2.500v5L8 8l2.500 2v5H13M1 8h2M13 8h2" strokeWidth="1.600" />
          </Icon>
        </button>
        <button type="button" aria-label="Render Time pane" className="ml-[11px]">
          <Icon className="h-4 w-[18px]" box="0 0 18 16">
            <circle cx="6" cy="6" r="5.500" {...solid} />
            <path d="M3 10h8v3h5v2H2zM11 7h6v2h-6z" {...solid} />
            <path d="M13 6l4-5M12 11l5-2" strokeWidth="1.500" />
          </Icon>
        </button>
        <p className="ml-[39px] w-[231px] shrink-0 text-[#a8a8a8]">
          Frame Render Time <span className="ml-0.5 font-bold text-[#5bd9b5]">3ms</span>
        </p>
        <button type="button" className="h-[22px] w-[191px] shrink-0 rounded-[3px] bg-[#202020] text-[#a8a8a8]">
          Toggle Switches / Modes
        </button>
        <Icon className="ml-[200px] h-[7px] w-[14px]" box="0 0 14 7">
          <path d="M0 7l3-3 2 1 3-4 6 6z" {...solid} />
        </Icon>
        <input
          type="range"
          aria-label="Timeline zoom"
          defaultValue="0"
          className="mx-4 h-4 w-[70px] appearance-none bg-transparent [&::-webkit-slider-runnable-track]:h-0.5 [&::-webkit-slider-runnable-track]:bg-[#444] [&::-webkit-slider-thumb]:-mt-1.5 [&::-webkit-slider-thumb]:h-3.5 [&::-webkit-slider-thumb]:w-3.5 [&::-webkit-slider-thumb]:appearance-none [&::-webkit-slider-thumb]:rounded-full [&::-webkit-slider-thumb]:border-2 [&::-webkit-slider-thumb]:border-[#a8a8a8] [&::-webkit-slider-thumb]:bg-[#282828]"
        />
        <Icon className="h-3 w-6" box="0 0 24 12">
          <path d="M0 11l6-8 1.500 1L4 11zM6 11L14 0l10 11z" {...solid} />
        </Icon>
      </footer>
    </section>
  );
}

export default function App() {
  return (
    <main className="flex h-screen flex-col overflow-hidden bg-[#161616] font-['Noto_Sans_CJK_SC','Noto_Sans',sans-serif] text-[15px] leading-5 text-[#9a9a9a]">
      <Toolbar />
      <div className="mt-[3px] flex min-h-0 flex-1">
        <span className="w-[3px] shrink-0" />
        <ProjectPanel />
        <span className="w-1.5 shrink-0" />
        <Viewer />
        <span className="w-1 shrink-0" />
        <SidePanels />
      </div>
      <Timeline />
    </main>
  );
}
